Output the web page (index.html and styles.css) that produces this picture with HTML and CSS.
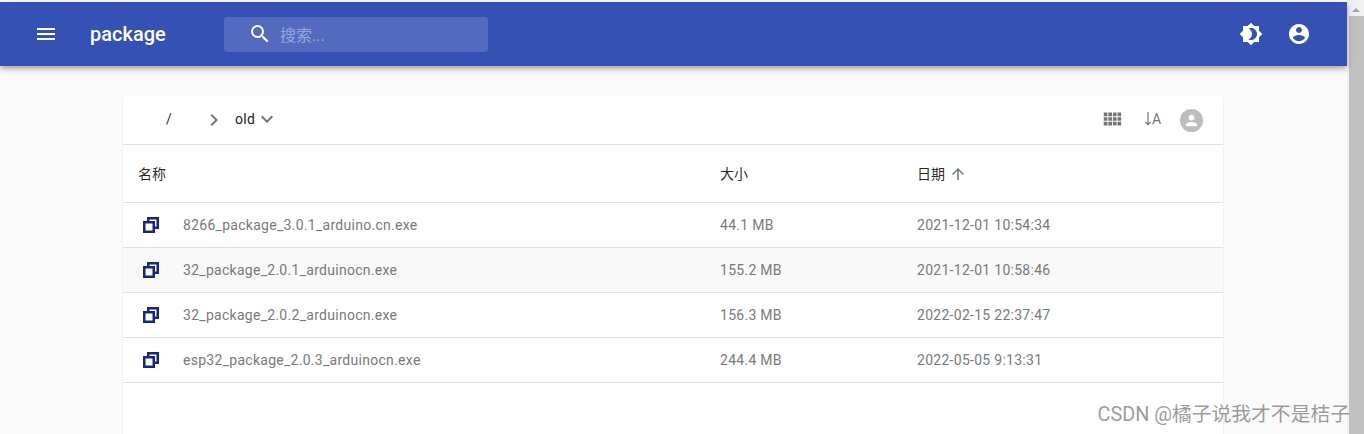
FILE: index.html
```html
<!DOCTYPE html>
<html lang="zh-CN">
<head>
    <meta charset="UTF-8">
    <meta name="viewport" content="width=device-width, initial-scale=1.0">
    <title>package</title>
    <link rel="stylesheet" href="styles.css">
</head>
<body>
    <div class="page">
        <div class="main">
            <header class="app-bar">
                <svg class="bar-icon menu-icon" viewBox="0 0 24 24"><path d="M3 18h18v-2H3v2zm0-5h18v-2H3v2zm0-7v2h18V6H3z"/></svg>
                <div class="app-title">package</div>
                <div class="search">
                    <svg class="search-icon" viewBox="0 0 24 24"><path d="M15.5 14h-.79l-.28-.27A6.47 6.47 0 0 0 16 9.5 6.5 6.5 0 1 0 9.5 16c1.61 0 3.09-.59 4.23-1.57l.27.28v.79l5 4.99L20.49 19l-4.99-5zm-6 0C7.01 14 5 11.99 5 9.5S7.01 5 9.5 5 14 7.01 14 9.5 11.99 14 9.5 14z"/></svg>
                    <span class="search-text">搜索...</span>
                </div>
                <div class="bar-right">
                    <svg class="bar-icon" viewBox="0 0 24 24"><path d="M20 8.69V4h-4.69L12 .69 8.69 4H4v4.69L.69 12 4 15.31V20h4.69L12 23.31 15.31 20H20v-4.69L23.31 12 20 8.69zM12 18c-.89 0-1.74-.2-2.5-.55C11.56 16.5 13 14.42 13 12s-1.44-4.5-3.5-5.45C10.26 6.2 11.11 6 12 6c3.31 0 6 2.69 6 6s-2.69 6-6 6z"/></svg>
                    <svg class="bar-icon" viewBox="0 0 24 24"><path d="M12 2C6.48 2 2 6.48 2 12s4.48 10 10 10 10-4.48 10-10S17.52 2 12 2zm0 3c1.66 0 3 1.34 3 3s-1.34 3-3 3-3-1.34-3-3 1.34-3 3-3zm0 14.2c-2.5 0-4.71-1.28-6-3.22.03-1.99 4-3.08 6-3.08 1.99 0 5.97 1.09 6 3.08-1.29 1.94-3.5 3.22-6 3.22z"/></svg>
                </div>
            </header>

            <div class="content">
                <div class="card">
                    <div class="toolbar">
                        <span class="crumb-root">/</span>
                        <svg class="crumb-sep" viewBox="0 0 24 24"><path d="M10 6 8.59 7.41 13.17 12l-4.58 4.59L10 18l6-6z"/></svg>
                        <span class="crumb">old</span>
                        <svg class="crumb-down" viewBox="0 0 24 24"><path d="M7.41 8.59 12 13.17l4.59-4.58L18 10l-6 6-6-6z"/></svg>
                        <div class="tools">
                            <svg class="tool-icon" viewBox="0 0 24 24"><path d="M3 9h4V5H3v4zm0 5h4v-4H3v4zm5 0h4v-4H8v4zm5 0h4v-4h-4v4zM8 9h4V5H8v4zm5-4v4h4V5h-4zm5 9h4v-4h-4v4zM3 19h4v-4H3v4zm5 0h4v-4H8v4zm5 0h4v-4h-4v4zm5 0h4v-4h-4v4zm0-14v4h4V5h-4z"/></svg>
                            <span class="sort-btn">
                                <svg class="sort-arrow" viewBox="0 0 6 14"><path d="M2.400 0h1.200v11.200L5.200 9.600l.8.800L3 13.400 0 10.400l.8-.8 1.600 1.600z"/></svg>
                                <span class="sort-letter">A</span>
                            </span>
                            <span class="avatar">
                                <svg viewBox="0 0 24 24"><path d="M12 12c2.210 0 4-1.790 4-4s-1.790-4-4-4-4 1.790-4 4 1.790 4 4 4zm0 2c-2.670 0-8 1.340-8 4v2h16v-2c0-2.660-5.330-4-8-4z"/></svg>
                            </span>
                        </div>
                    </div>

                    <table class="files">
                        <thead>
                            <tr>
                                <th class="col-name">名称</th>
                                <th class="col-size">大小</th>
                                <th class="col-date">日期<svg class="sort-up" viewBox="0 0 24 24"><path d="m4 12 1.410 1.410L11 7.830V20h2V7.830l5.580 5.590L20 12l-8-8-8 8z"/></svg></th>
                            </tr>
                        </thead>
                        <tbody>
                            <tr>
                                <td><div class="file-cell"><svg class="file-icon" viewBox="0 0 16 16"><path fill-rule="evenodd" d="M0 4h12v12H0zM2.500 6.500v7h7v-7zM4 0h12v12h-4V9.500h1.500v-7h-7V4H4z"/></svg>8266_package_3.0.1_arduino.cn.exe</div></td>
                                <td>44.1 MB</td>
                                <td>2021-12-01 10:54:34</td>
                            </tr>
                            <tr class="hovered">
                                <td><div class="file-cell"><svg class="file-icon" viewBox="0 0 16 16"><path fill-rule="evenodd" d="M0 4h12v12H0zM2.500 6.500v7h7v-7zM4 0h12v12h-4V9.500h1.500v-7h-7V4H4z"/></svg>32_package_2.0.1_arduinocn.exe</div></td>
                                <td>155.2 MB</td>
                                <td>2021-12-01 10:58:46</td>
                            </tr>
                            <tr>
                                <td><div class="file-cell"><svg class="file-icon" viewBox="0 0 16 16"><path fill-rule="evenodd" d="M0 4h12v12H0zM2.500 6.500v7h7v-7zM4 0h12v12h-4V9.500h1.500v-7h-7V4H4z"/></svg>32_package_2.0.2_arduinocn.exe</div></td>
                                <td>156.3 MB</td>
                                <td>2022-02-15 22:37:47</td>
                            </tr>
                            <tr>
                                <td><div class="file-cell"><svg class="file-icon" viewBox="0 0 16 16"><path fill-rule="evenodd" d="M0 4h12v12H0zM2.500 6.500v7h7v-7zM4 0h12v12h-4V9.500h1.500v-7h-7V4H4z"/></svg>esp32_package_2.0.3_arduinocn.exe</div></td>
                                <td>244.4 MB</td>
                                <td>2022-05-05 9:13:31</td>
                            </tr>
                        </tbody>
                    </table>
                </div>
            </div>
        </div>

        <div class="scrollbar">
            <div class="scroll-up"></div>
            <div class="scroll-thumb"></div>
        </div>
    </div>

    <div class="watermark">CSDN @橘子说我才不是桔子</div>
</body>
</html>
```

FILE: styles.css
```css
html, body {
    height: 100%;
}
body {
    margin: 0;
    overflow: hidden;
    background: #fff;
    font-family: Roboto, "Noto Sans CJK SC", sans-serif;
}
.page {
    display: flex;
    height: 434px;
    padding-top: 2px;
    box-sizing: border-box;
}
.main {
    flex: 1;
    min-width: 0;
    display: flex;
    flex-direction: column;
    background: #fafafa;
}
.app-bar {
    position: relative;
    z-index: 1;
    flex: none;
    height: 64px;
    display: flex;
    align-items: center;
    padding: 0 36px 0 34px;
    background: #3551b4;
    box-shadow: 0 2px 4px -1px rgba(0,0,0,.2), 0 4px 5px 0 rgba(0,0,0,.14), 0 1px 10px 0 rgba(0,0,0,.12);
}
.bar-icon {
    width: 24px;
    height: 24px;
    fill: #fff;
    flex: none;
}
.app-title {
    margin-left: 32px;
    width: 134px;
    font-size: 20px;
    font-weight: 500;
    color: #fff;
}
.search {
    width: 264px;
    height: 35px;
    display: flex;
    align-items: center;
    border-radius: 4px;
    background: rgba(255,255,255,.15);
}
.search-icon {
    width: 24px;
    height: 24px;
    margin-left: 24px;
    fill: #fff;
}
.search-text {
    margin-left: 8px;
    font-size: 16px;
    color: rgba(255,255,255,.42);
}
.bar-right {
    margin-left: auto;
    display: flex;
    gap: 24px;
}
.content {
    flex: 1;
    padding: 30px 124px 0 123px;
    min-height: 0;
}
.card {
    height: 100%;
    background: #fff;
    border-radius: 4px 4px 0 0;
    box-shadow: 0 1px 3px rgba(0,0,0,.08);
}
.toolbar {
    height: 48px;
    display: flex;
    align-items: center;
    border-bottom: 1px solid #e0e0e0;
    font-size: 14px;
    letter-spacing: .3px;
}
.crumb-root {
    margin-left: 43px;
    width: 36px;
    margin-top: -2px;
    color: #333;
}
.crumb-sep {
    width: 24px;
    height: 24px;
    fill: #757575;
    margin-top: -1px;
}
.crumb {
    margin-left: 9px;
    margin-top: -2px;
    color: #222;
}
.crumb-down {
    width: 24px;
    height: 24px;
    fill: #757575;
    margin-top: -2px;
}
.tools {
    margin-left: auto;
    margin-right: 20px;
    display: flex;
    align-items: center;
}
.tool-icon {
    width: 22px;
    height: 22px;
    fill: #757575;
    margin-top: -2px;
}
.sort-btn {
    margin-left: 22px;
    width: 20px;
    display: flex;
    align-items: center;
    margin-top: -2px;
}
.sort-arrow {
    width: 6px;
    height: 14px;
    fill: #757575;
}
.sort-letter {
    margin-left: 1px;
    font-size: 14px;
    color: #757575;
    letter-spacing: 0;
}
.avatar {
    margin-left: 15px;
    width: 23px;
    height: 23px;
    border-radius: 50%;
    background: #bdbdbd;
    display: flex;
    align-items: center;
    justify-content: center;
}
.avatar svg {
    width: 17px;
    height: 17px;
    fill: #fff;
}
.files {
    width: 100%;
    border-collapse: collapse;
    table-layout: fixed;
}
.files th {
    height: 55px;
    padding: 0 0 2px 15px;
    text-align: left;
    font-size: 14px;
    font-weight: 400;
    color: rgba(0,0,0,.87);
    border-bottom: 1px solid #e0e0e0;
}
.col-name {
    width: 567px;
}
.col-size {
    width: 182px;
}
.sort-up {
    width: 18px;
    height: 18px;
    fill: #757575;
    vertical-align: -4px;
    margin-left: 4px;
}
.files td {
    height: 44px;
    padding: 0 0 0 15px;
    font-size: 14px;
    letter-spacing: .28px;
    color: #7a7a7a;
    border-bottom: 1px solid #e0e0e0;
}
.hovered td {
    background: #f9f9f9;
}
.file-cell {
    display: flex;
    align-items: center;
}
.file-icon {
    width: 16px;
    height: 16px;
    fill: #16277f;
    margin: 0 24px 0 5px;
}
.scrollbar {
    flex: none;
    width: 17px;
    background: #f1f1f1;
    margin-top: -2px;
}
.scroll-up {
    width: 0;
    height: 0;
    margin: 8px auto 4px;
    border-left: 4px solid transparent;
    border-right: 4px solid transparent;
    border-bottom: 4px solid #a3a3a3;
}
.scroll-thumb {
    height: 420px;
    margin-left: 2px;
    background: #c1c1c1;
}
.watermark {
    position: absolute;
    right: 14px;
    top: 401px;
    font-size: 19.8px;
    line-height: 28px;
    color: rgba(70,70,70,.55);
    white-space: nowrap;
}
```
